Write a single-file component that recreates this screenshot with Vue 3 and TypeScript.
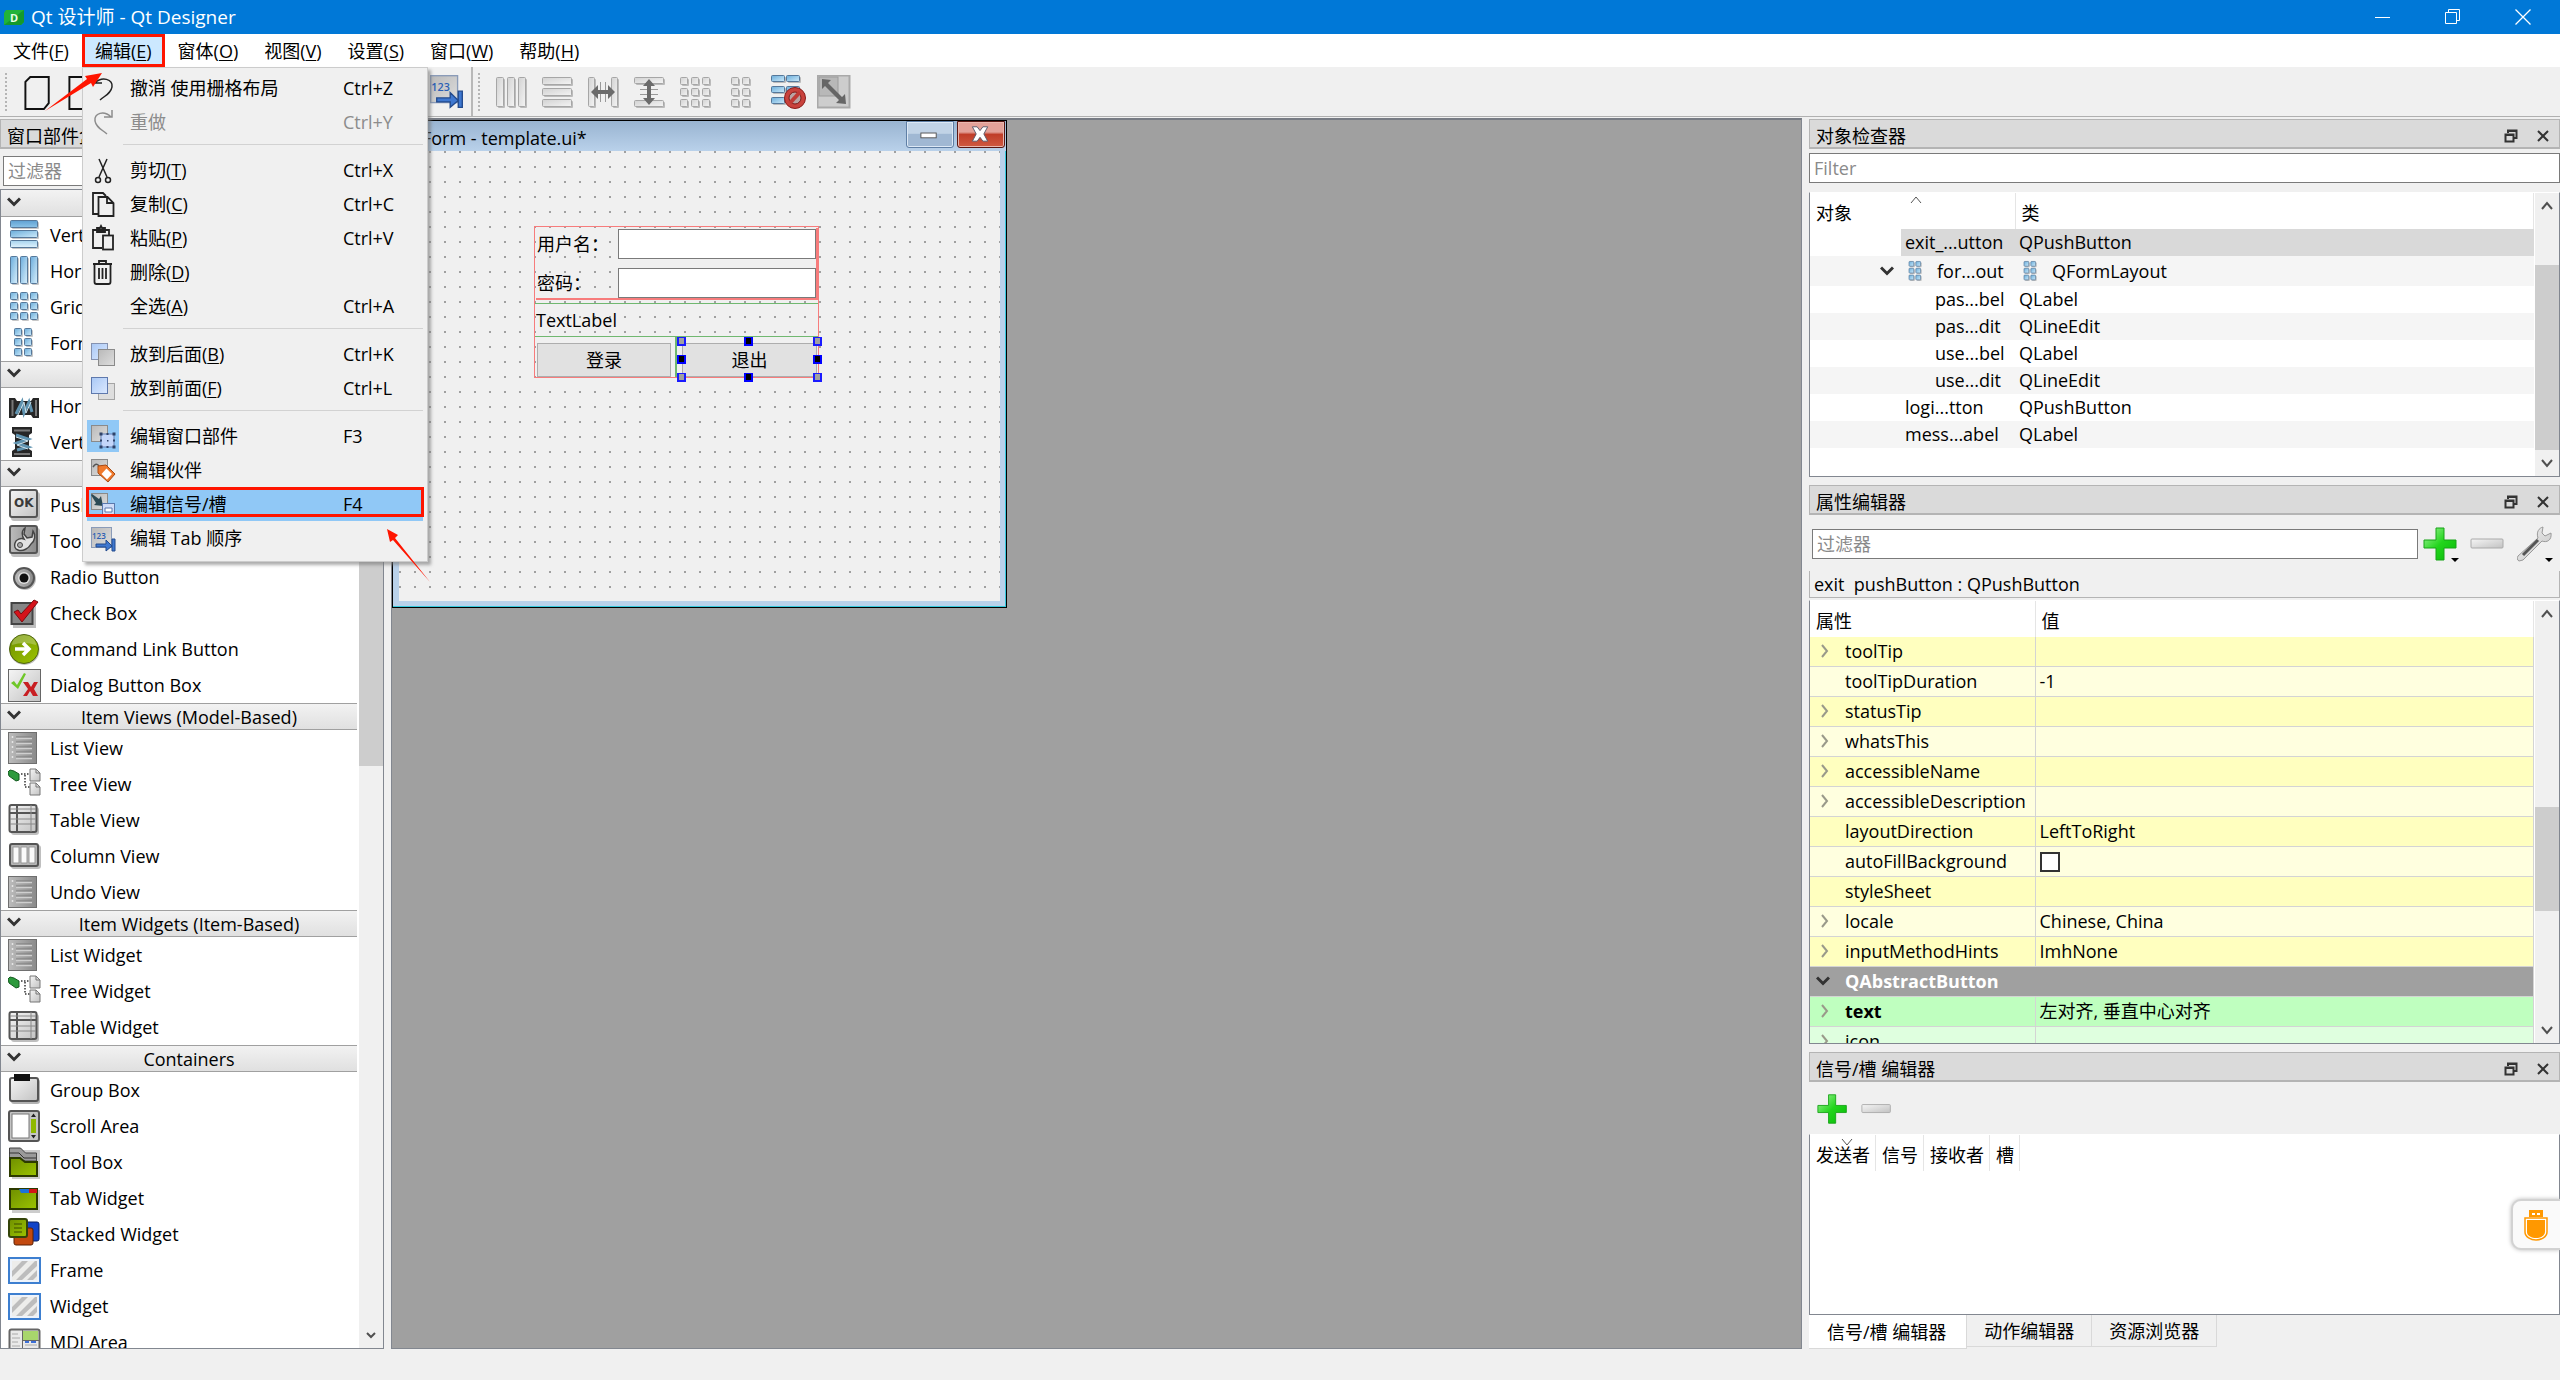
<script setup lang="ts">
import { ref } from 'vue'

type IconMap = Record<string, string>

const bar = (x: number, y: number, w: number, h: number, fill: string, stroke: string) =>
  `<rect x="${x + 2}" y="${y + 2}" width="${w}" height="${h}" rx="1" fill="#000" opacity=".22"/>` +
  `<rect x="${x + 0.5}" y="${y + 0.5}" width="${w}" height="${h}" rx="1" fill="url(#${fill})" stroke="${stroke}"/>`

const cells = (xs: number[], ys: number[], w: number, h: number, fill: string, stroke: string) =>
  ys.map((y) => xs.map((x) => bar(x, y, w, h, fill, stroke)).join('')).join('')

const BLUE = '#56789a'
const GREY = '#a6a6a6'

const page = (x: number, y: number) =>
  `<path d="M${x} ${y}h6l4 4v8h-10z" fill="url(#silver)" stroke="#777"/><path d="M${x + 6} ${y}v4h4" fill="none" stroke="#777"/>`

const listIcon =
  '<rect x=".5" y=".5" width="28" height="31" fill="url(#steel)" stroke="#6f6f6f"/>' +
  '<path d="M8 5h16M8 10h16M8 15h16M8 20h16M8 25h16" stroke="#7c7c7c" stroke-width="1"/>' +
  '<path d="M8 6.500h16M8 11.500h16M8 16.500h16M8 21.500h16M8 26.500h16" stroke="#cfcfcf" stroke-width="1.500"/>' +
  '<path d="M4.500 4v25" stroke="#e4e4e4" stroke-width="1.500" stroke-dasharray="2 3"/>'

const treeIcon =
  '<path d="M0 4l2-2 4 1 5 3v6l-3 1-7-5z" fill="#2d9a3d" stroke="#145c20"/>' +
  '<path d="M13 6h9M17 7v12h5" fill="none" stroke="#333" stroke-width="1.500" stroke-dasharray="1.500 1.500"/>' +
  page(22, 1) + page(22, 15)

const tableIcon =
  '<rect x="3" y="3" width="28" height="28" rx="3" fill="#000" opacity=".25"/>' +
  '<rect x="1.500" y="1" width="27" height="27" rx="2" fill="url(#silver)" stroke="#555" stroke-width="2"/>' +
  '<path d="M2 9h26M9 1v27" stroke="#555" stroke-width="2"/><path d="M2 5h26M2 15h26M2 20h26M23 1v27" stroke="#888"/>'

const hatch =
  '<rect x="1" y="4" width="31" height="25" fill="#eef3fa" stroke="#3d7fd0" stroke-width="2"/>' +
  '<rect x="4" y="7" width="25" height="19" fill="#ededeb"/>' +
  '<path d="M4 17l10-10h6L4 23zM8 26l19-19h2v5L14 26zM19 26l10-10v6l-4 4z" fill="#bdbdbd"/>'

const boxIcons: IconMap = {
  vlay: cells([2], [1], 27, 7, 'blueA', BLUE) + cells([2], [11], 27, 7, 'blueH', BLUE) + cells([2], [21], 27, 7, 'blueC', BLUE),
  hlay: cells([2, 12, 22], [1], 7, 27, 'blueV', BLUE),
  grid: cells([2, 12, 22], [1, 11, 21], 7, 7, 'blueH', BLUE),
  form: cells([6, 16], [1, 11, 21], 7, 7, 'blueH', BLUE),
  hspring:
    '<path d="M1 8h6l2 3h14l2-3h6v20h-6l-2-3H9l-2 3H1z" fill="#262626"/><path d="M4.500 10v16M28 10v16" stroke="#777" stroke-width="2"/>' +
    '<path d="M8 24l6-12 2 11 5-11 3 10" fill="none" stroke="#5f93b0" stroke-width="3"/><path d="M10 25l6-13 2 11 5-11" fill="none" stroke="#cfe3ec"/>',
  vspring:
    '<path d="M4 1h20v6l-3 2v14l3 2v6H4v-6l3-2V9L4 7z" fill="#262626"/><path d="M6 4.500h16M6 28h16" stroke="#777" stroke-width="2"/>' +
    '<path d="M8 9l12 4-11 4 11 4-11 3" fill="none" stroke="#5f93b0" stroke-width="3"/><path d="M8 11l12 4-11 4 11 4" fill="none" stroke="#cfe3ec"/>',
  push:
    '<rect x="3" y="3" width="29" height="29" rx="3" fill="#000" opacity=".25"/><rect x="2" y="1" width="27" height="27" rx="2" fill="url(#silver)" stroke="#555" stroke-width="2"/>' +
    '<text x="6" y="18" font-size="12" font-weight="700" font-family="DejaVu Sans, sans-serif" fill="#3a3a3a">OK</text>',
  tool:
    '<rect x="3" y="3" width="29" height="29" rx="3" fill="#000" opacity=".25"/><rect x="2" y="1" width="27" height="27" rx="2" fill="url(#steel)" stroke="#555" stroke-width="2"/>' +
    '<path d="M17 3c-4 3-3 8-1 11-3-1-8 0-9 4-1 3 0 6 3 7 5 2 11-2 13-6 4-3 5-9 2-13l-1 6-5 1-3-4z" fill="#e2e2e2" stroke="#444" stroke-width="1.500"/><circle cx="12" cy="20" r="2.500" fill="#aaa" stroke="#444"/>',
  radio:
    '<circle cx="17" cy="18" r="11" fill="#000" opacity=".25"/><circle cx="16" cy="17" r="10" fill="url(#steel)" stroke="#555" stroke-width="2"/><circle cx="16" cy="17" r="6" fill="#ddd"/><circle cx="16" cy="17" r="4.500" fill="#111"/>',
  check:
    '<rect x="5" y="8" width="23" height="23" fill="#000" opacity=".25"/><rect x="3.500" y="6" width="21" height="21" fill="#858585" stroke="#444" stroke-width="2"/>' +
    '<path d="M6 15l4-2 3 4L26 3l4 2-16 20z" fill="#d5131b" stroke="#7c0b0f"/>',
  command:
    '<circle cx="16.500" cy="17" r="15" fill="#000" opacity=".25"/><circle cx="16" cy="16" r="14.500" fill="url(#olive)" stroke="#4f6510"/><path d="M4 12a12 10 0 0 1 24 0q-12-4-24 0z" fill="#fff" opacity=".25"/>' +
    '<path d="M7 16h14M15 10l6 6-6 6" fill="none" stroke="#fff" stroke-width="3.500"/>',
  dialog:
    '<rect x=".5" y=".5" width="32" height="32" fill="url(#silver)" stroke="#666"/><path d="M3 14l3-2 3 4 7-12 2 1-8 15z" fill="#6fc728"/>' +
    '<path d="M15 13h5l3 5 3-5h4l-4 7 4 7h-5l-3-5-3 5h-4l5-7z" fill="#c81e22"/>',
  list: listIcon,
  tree: treeIcon,
  table: tableIcon,
  column:
    '<rect x="3" y="5" width="30" height="24" rx="3" fill="#000" opacity=".25"/><rect x="2" y="4" width="28" height="22" rx="2" fill="#b5b5b5" stroke="#555" stroke-width="2"/>' +
    '<path d="M5 7h6v16H5zM13 7h6v16h-6zM21 7h6v16h-6z" fill="#fafafa" stroke="#999"/>',
  group:
    '<rect x="3" y="5" width="29" height="25" rx="3" fill="#000" opacity=".3"/><rect x="2" y="4" width="28" height="23" rx="2" fill="url(#silver)" stroke="#555" stroke-width="2"/><rect x="6" y="0" width="16" height="7" fill="#111"/>',
  scroll:
    '<rect x="1" y="1" width="30" height="30" rx="2" fill="#c4c4c4" stroke="#555" stroke-width="2"/><rect x="4" y="4" width="17" height="24" fill="#fff" stroke="#777"/>' +
    '<rect x="23" y="9" width="5" height="14" fill="#8fb800"/><path d="M23 7l2.500-3.500L28 7zM23 25h5l-2.500 3.500z" fill="#222"/>',
  toolbox:
    '<rect x="4" y="4" width="28" height="29" fill="#000" opacity=".2"/><path d="M1.500 2h11l5 5h11v8h-27z" fill="#9a9a9a" stroke="#444"/><path d="M1 7h10l5 5h12" fill="none" stroke="#333"/>' +
    '<path d="M2 12h10l5 4h12v14H2z" fill="url(#olive)" stroke="#2c3a00" stroke-width="2"/>',
  tabw:
    '<rect x="4" y="8" width="28" height="23" fill="#000" opacity=".2"/><rect x="2" y="7" width="27" height="20" fill="url(#olive)" stroke="#2c3a00" stroke-width="2"/>' +
    '<path d="M11 7h10v4H13z" fill="#1c73d8"/><path d="M21 7h8v4h-8z" fill="#d21515"/>',
  stacked:
    '<rect x="18" y="4" width="13" height="19" rx="2" fill="#1344c8" stroke="#0a2060"/><rect x="6" y="10" width="19" height="17" rx="2" fill="#c2490f" stroke="#5c2104"/>' +
    '<rect x="1" y="1" width="18" height="18" rx="2" fill="url(#olive)" stroke="#34440a" stroke-width="2"/><path d="M6 6h8M6 10h8M6 14h8" stroke="#3c4d00"/>',
  frame: hatch,
  mdi:
    '<rect x="1.500" y="3.500" width="30" height="28" rx="2" fill="#e9e9e9" stroke="#666" stroke-width="2"/><rect x="15" y="5" width="15" height="9" fill="#a8d66c"/>' +
    '<path d="M14.500 4v28M15 14.500h16" stroke="#666"/><path d="M4 8h6M4 12h8M4 16h6M4 20h8M17 19h12" stroke="#aaa"/><path d="M17 16h4M23 16h5" stroke="#3c6fd8" stroke-width="2"/>',
}

interface BoxItem { icon: string; label: string }
interface BoxGroup { title: string; items: BoxItem[] }

const widgetBox: BoxGroup[] = [
  { title: 'Layouts', items: [
    { icon: 'vlay', label: 'Vertical Layout' }, { icon: 'hlay', label: 'Horizontal Layout' },
    { icon: 'grid', label: 'Grid Layout' }, { icon: 'form', label: 'Form Layout' } ] },
  { title: 'Spacers', items: [
    { icon: 'hspring', label: 'Horizontal Spacer' }, { icon: 'vspring', label: 'Vertical Spacer' } ] },
  { title: 'Buttons', items: [
    { icon: 'push', label: 'Push Button' }, { icon: 'tool', label: 'Tool Button' }, { icon: 'radio', label: 'Radio Button' },
    { icon: 'check', label: 'Check Box' }, { icon: 'command', label: 'Command Link Button' }, { icon: 'dialog', label: 'Dialog Button Box' } ] },
  { title: 'Item Views (Model-Based)', items: [
    { icon: 'list', label: 'List View' }, { icon: 'tree', label: 'Tree View' }, { icon: 'table', label: 'Table View' },
    { icon: 'column', label: 'Column View' }, { icon: 'list', label: 'Undo View' } ] },
  { title: 'Item Widgets (Item-Based)', items: [
    { icon: 'list', label: 'List Widget' }, { icon: 'tree', label: 'Tree Widget' }, { icon: 'table', label: 'Table Widget' } ] },
  { title: 'Containers', items: [
    { icon: 'group', label: 'Group Box' }, { icon: 'scroll', label: 'Scroll Area' }, { icon: 'toolbox', label: 'Tool Box' },
    { icon: 'tabw', label: 'Tab Widget' }, { icon: 'stacked', label: 'Stacked Widget' }, { icon: 'frame', label: 'Frame' },
    { icon: 'frame', label: 'Widget' }, { icon: 'mdi', label: 'MDI Area' } ] },
]

const layoutTools = [
  { name: '水平布局', art: cells([1, 12, 23], [2], 7, 29, 'greyH', GREY) },
  { name: '垂直布局', art: cells([1], [2, 13, 24], 29, 7, 'greyH', GREY) },
  { name: '水平分裂器', art: cells([1, 24], [2], 6, 29, 'greyH', GREY) +
    '<path d="M13.500 7v20M18.500 7v20" stroke="#999"/><path d="M4 17l7-7v5h10v-5l7 7-7 7v-5H11v5z" fill="#6b6b6b"/>' },
  { name: '垂直分裂器', art: cells([1], [2, 25], 29, 6, 'greyH', GREY) +
    '<path d="M7 14.500h18M7 19.500h18" stroke="#999"/><path d="M16 4l6 7h-4v12h4l-6 7-6-7h4V11h-4z" fill="#6b6b6b"/>' },
  { name: '栅格布局', art: cells([1, 12, 23], [2, 13, 24], 7, 7, 'greyH', GREY) },
  { name: '表单布局', art: cells([6, 17], [2, 13, 24], 7, 7, 'greyH', GREY) },
  { name: '打破布局', art: cells([0, 15], [0, 11, 22], 13, 6, 'blueH', BLUE) +
    '<circle cx="24" cy="23" r="10.500" fill="#c9423c" stroke="#8a1d1a"/><circle cx="24" cy="23" r="6" fill="#b9a3a3" stroke="#7c1c1a"/><path d="M19 28l10-11" stroke="#c03a35" stroke-width="4"/>' },
  { name: '调整大小', art: '<rect x=".5" y=".5" width="32" height="32" fill="#cdcdcd" stroke="#a9a9a9" stroke-width="2"/><rect x="2" y="2" width="19" height="19" fill="#b8b8b8" stroke="#9c9c9c"/>' +
    '<path d="M5 4l9 1-3 3 14 14 3-3 1 10-10-1 3-3L8 11l-3 3z" fill="#666"/>' },
]

const sq = (x: number, y: number, fill: string, stroke = '#8a8a8a') =>
  `<rect x="${x + 0.5}" y="${y + 0.5}" width="16" height="16" fill="${fill}" stroke="${stroke}"/>`

const menuIcons: IconMap = {
  undo: '<path d="M8 11C15 4 26 7 25 15c-1 6-6 8-12 13M7 4v7h8" fill="none" stroke="#222" stroke-width="1.500"/>',
  redo: '<path d="M24 11C17 4 7 7 8 15c1 6 6 8 12 13M25 4v7h-8" fill="none" stroke="#8c8c8c" stroke-width="1.500"/>',
  cut: '<path d="M12 5l8 18M20 5l-8 18" fill="none" stroke="#222" stroke-width="1.500"/><circle cx="11" cy="26" r="2.500" fill="none" stroke="#222" stroke-width="1.500"/><circle cx="21" cy="26" r="2.500" fill="none" stroke="#222" stroke-width="1.500"/>',
  copy: '<path d="M11 26H6V5h10l3 3" fill="none" stroke="#222" stroke-width="1.800"/><path d="M11.500 9h9l6 6v13h-15zM20 9v6h6" fill="none" stroke="#222" stroke-width="1.800"/>',
  paste: '<path d="M15 26H6V8h16v5M10 10V6h3l1-2 1 2h3v4z" fill="none" stroke="#222" stroke-width="1.800"/><rect x="16" y="13.500" width="10" height="14" fill="none" stroke="#222" stroke-width="1.800"/>',
  del: '<path d="M6 8h19M12 8V5h7v3M7.500 8v18q0 2 2 2h12q2 0 2-2V8M12 12v11M15.500 12v11M19 12v11" fill="none" stroke="#222" stroke-width="1.800"/>',
  back: sq(4, 5, 'url(#sky)', '#8592b0') + sq(11, 11, 'url(#steelLight)'),
  front: sq(11, 11, '#dedede', '#a5a5a5') + sq(4, 5, 'url(#sky)', '#5f79ad'),
  widgets: sq(4, 5, 'url(#steelLight)') + '<rect x="14" y="14" width="13" height="13" fill="#c3d6fa" stroke="#6480b5"/>' +
    '<path d="M12.500 12.500h3v3h-3zM19.500 13h2v2h-2zM25.500 12.500h3v3h-3zM13 19.500h2v2h-2zM26 19.500h2v2h-2zM12.500 25.500h3v3h-3zM19.500 26h2v2h-2zM25.500 25.500h3v3h-3zM20 20h1.500v1.500H20z" fill="#2f4369"/>',
  buddy: sq(4, 5, 'url(#steelLight)') + '<path d="M6 13q3-5 6-1" stroke="#555" stroke-width="1.500" fill="none"/><path d="M11 12l8-1 9 9-7 8-10-9z" fill="#f0792b" stroke="#a9480f"/><path d="M19.500 14.500l5.500 5.500-5 5.500-5.500-5.500z" fill="#fff"/>',
  signals: sq(4, 5, 'url(#steelLight)') + '<path d="M5 6l7 5 2-3 2 10-9-1 2-2-5-8z" fill="#2c4a55"/><rect x="15.500" y="15.500" width="12" height="11" fill="#cfdcf8" stroke="#5b79ad"/><path d="M18 20h7v4h-7z" fill="#fff" stroke="#5b79ad"/>',
  tab: '<rect x="4.500" y="5.500" width="20" height="20" fill="url(#steelLight)" stroke="#8a9bb8"/><path d="M9 22h10v-4l6 6-6 5v-4H9zM25 17h3v12h-3z" fill="#3f78d0" stroke="#224a8d"/>' +
    '<text x="5" y="17" font-size="8" font-weight="600" font-family="Open Sans, sans-serif" fill="#2b5fb4">123</text>',
}

interface MenuItem { icon?: string; text: string; key?: string; sc?: string; off?: boolean; checked?: boolean; hot?: boolean }

const editMenu: MenuItem[][] = [
  [ { icon: 'undo', text: '撤消 使用栅格布局', sc: 'Ctrl+Z' }, { icon: 'redo', text: '重做', sc: 'Ctrl+Y', off: true } ],
  [ { icon: 'cut', text: '剪切', key: 'T', sc: 'Ctrl+X' }, { icon: 'copy', text: '复制', key: 'C', sc: 'Ctrl+C' },
    { icon: 'paste', text: '粘贴', key: 'P', sc: 'Ctrl+V' }, { icon: 'del', text: '删除', key: 'D' }, { text: '全选', key: 'A', sc: 'Ctrl+A' } ],
  [ { icon: 'back', text: '放到后面', key: 'B', sc: 'Ctrl+K' }, { icon: 'front', text: '放到前面', key: 'F', sc: 'Ctrl+L' } ],
  [ { icon: 'widgets', text: '编辑窗口部件', sc: 'F3', checked: true }, { icon: 'buddy', text: '编辑伙伴' },
    { icon: 'signals', text: '编辑信号/槽', sc: 'F4', hot: true }, { icon: 'tab', text: '编辑 Tab 顺序' } ],
]

const menus = [
  { text: '文件', key: 'F' }, { text: '编辑', key: 'E' }, { text: '窗体', key: 'O' }, { text: '视图', key: 'V' },
  { text: '设置', key: 'S' }, { text: '窗口', key: 'W' }, { text: '帮助', key: 'H' },
]

const objects = [
  { name: 'exit_...utton', cls: 'QPushButton', level: 1, selected: true },
  { name: 'for...out', cls: 'QFormLayout', level: 1, layout: true },
  { name: 'pas...bel', cls: 'QLabel', level: 2 },
  { name: 'pas...dit', cls: 'QLineEdit', level: 2 },
  { name: 'use...bel', cls: 'QLabel', level: 2 },
  { name: 'use...dit', cls: 'QLineEdit', level: 2 },
  { name: 'logi...tton', cls: 'QPushButton', level: 1 },
  { name: 'mess...abel', cls: 'QLabel', level: 1 },
]

interface Prop { name: string; value?: string; more?: boolean; check?: boolean; tone: string }
const properties: Prop[] = [
  { name: 'toolTip', more: true, tone: 'y1' },
  { name: 'toolTipDuration', value: '-1', tone: 'y2' },
  { name: 'statusTip', more: true, tone: 'y1' },
  { name: 'whatsThis', more: true, tone: 'y2' },
  { name: 'accessibleName', more: true, tone: 'y1' },
  { name: 'accessibleDescription', more: true, tone: 'y2' },
  { name: 'layoutDirection', value: 'LeftToRight', tone: 'y1' },
  { name: 'autoFillBackground', check: true, tone: 'y2' },
  { name: 'styleSheet', tone: 'y1' },
  { name: 'locale', value: 'Chinese, China', more: true, tone: 'y2' },
  { name: 'inputMethodHints', value: 'ImhNone', more: true, tone: 'y1' },
  { name: 'QAbstractButton', tone: 'head' },
  { name: 'text', value: '左对齐, 垂直中心对齐', more: true, tone: 'g1' },
  { name: 'icon', more: true, tone: 'g2' },
]

const handles = ['tl', 'tc', 'tr', 'ml', 'mr', 'bl', 'bc', 'br']
const tabs = ['信号/槽 编辑器', '动作编辑器', '资源浏览器']
const activeTab = ref(0)
const autoFill = ref(false)
</script>

<template>
  <div class="app">
    <svg class="defs" width="0" height="0" aria-hidden="true">
      <defs>
        <linearGradient id="blueA" x2="0" y2="1"><stop offset="0" stop-color="#5fa0d2" /><stop offset="1" stop-color="#8cc4e8" /></linearGradient>
        <linearGradient id="blueC" x2="0" y2="1"><stop offset="0" stop-color="#a5d3ee" /><stop offset="1" stop-color="#dff2fc" /></linearGradient>
        <linearGradient id="blueH" x2="1" y2="1"><stop offset="0" stop-color="#6aadda" /><stop offset="1" stop-color="#cdeafa" /></linearGradient>
        <linearGradient id="blueV" x2="1" y2="1"><stop offset="0" stop-color="#6aabdb" /><stop offset="1" stop-color="#d9f0fc" /></linearGradient>
        <linearGradient id="greyH" x2="1" y2="1"><stop offset="0" stop-color="#d2d2d2" /><stop offset="1" stop-color="#f4f4f4" /></linearGradient>
        <linearGradient id="silver" x2="1" y2="1"><stop offset="0" stop-color="#f5f5f5" /><stop offset="1" stop-color="#c2c2c2" /></linearGradient>
        <linearGradient id="steel" x2="1" y2="0"><stop offset="0" stop-color="#bcbcbc" /><stop offset="1" stop-color="#8a8a8a" /></linearGradient>
        <linearGradient id="steelLight" x2="1" y2="1"><stop offset="0" stop-color="#b9b9b9" /><stop offset="1" stop-color="#dedede" /></linearGradient>
        <linearGradient id="sky" x2="1" y2="1"><stop offset="0" stop-color="#a9c8f5" /><stop offset="1" stop-color="#dce9ff" /></linearGradient>
        <linearGradient id="olive" x2="1" y2="1"><stop offset="0" stop-color="#6f8f00" /><stop offset="1" stop-color="#9cc400" /></linearGradient>
        <linearGradient id="green" x2="1" y2="1"><stop offset="0" stop-color="#a8f5a0" /><stop offset=".5" stop-color="#22d51c" /><stop offset="1" stop-color="#06b806" /></linearGradient>
      </defs>
    </svg>

    <header class="titlebar">
      <svg class="logo" viewBox="0 0 20 15"><path d="M2 0h18v12l-3 3H0V3z" fill="#21b33a" /><path d="M0 15L20 0v12l-3 3z" fill="#149a2c" /><text x="6" y="12" font-size="11" font-weight="700" font-family="Open Sans, sans-serif" fill="#e8ffe8">D</text></svg>
      <h1>Qt 设计师 - Qt Designer</h1>
      <button aria-label="最小化"><svg viewBox="0 0 16 16"><path d="M0 8.500h15" stroke="#fff" /></svg></button>
      <button aria-label="还原"><svg viewBox="0 0 16 16"><path d="M.5 3.500h11v11H.5zM3.500 3V.5h11v11H12" fill="none" stroke="#fff" /></svg></button>
      <button aria-label="关闭"><svg viewBox="0 0 16 16"><path d="M.5.5l15 15M15.500.5l-15 15" fill="none" stroke="#fff" stroke-width="1.300" /></svg></button>
    </header>

    <nav class="menubar">
      <div v-for="m in menus" :key="m.key" class="menu" :class="{ open: m.key === 'E' }">
        <button class="menu-title">{{ m.text }}(<u>{{ m.key }}</u>)</button>
        <div v-if="m.key === 'E'" class="popup">
          <div v-for="(group, gi) in editMenu" :key="gi" class="popup-group">
            <button v-for="it in group" :key="it.text" class="popup-item" :class="{ hot: it.hot, checked: it.checked }" :disabled="it.off">
              <svg viewBox="0 0 32 32" v-html="it.icon ? menuIcons[it.icon] : ''" />
              <span class="caption">{{ it.text }}<template v-if="it.key">(<u>{{ it.key }}</u>)</template></span>
              <span class="shortcut">{{ it.sc }}</span>
            </button>
          </div>
        </div>
      </div>
    </nav>

    <div class="toolbar">
      <div class="tools files">
        <i class="grip" />
        <button aria-label="新建"><svg viewBox="0 0 33 36"><path d="M7 2h19v27l-5 6H2V7z" fill="none" stroke="#111" stroke-width="2" /></svg></button>
        <button aria-label="打开"><svg viewBox="0 0 33 36"><path d="M26 2H2v33h24z" fill="none" stroke="#111" stroke-width="2" /></svg></button>
        <button class="last" aria-label="编辑 Tab 顺序"><svg viewBox="4 5 26 26" v-html="menuIcons.tab" /></button>
      </div>
      <div class="tools">
        <i class="grip" />
        <button v-for="t in layoutTools" :key="t.name" :aria-label="t.name"><svg viewBox="0 0 35 35" v-html="t.art" /></button>
      </div>
    </div>

    <main class="work">
      <aside class="dock left">
        <h2 class="dock-title">窗口部件盒</h2>
        <input class="field box-filter" placeholder="过滤器" aria-label="过滤器" />
        <div class="box">
          <div class="box-list">
            <section v-for="g in widgetBox" :key="g.title">
              <h3><svg viewBox="0 0 14 10"><path d="M1 1.500l6 6 6-6" /></svg><span>{{ g.title }}</span></h3>
              <ul>
                <li v-for="it in g.items" :key="it.label"><svg viewBox="0 0 33 33" v-html="boxIcons[it.icon]" />{{ it.label }}</li>
              </ul>
            </section>
          </div>
          <div class="scrollbar">
            <svg viewBox="0 0 24 26"><path d="M7 15l5-5 5 5" /></svg>
            <div class="thumb" :style="{ flexGrow: 550 }" /><div :style="{ flexGrow: 557 }" />
            <svg viewBox="0 0 24 26"><path d="M8 11l4 4 4-4" /></svg>
          </div>
        </div>
      </aside>

      <section class="mdi">
        <div class="window">
          <header>
            <h2>Form - template.ui*</h2>
            <button class="min" aria-label="最小化"><svg viewBox="0 0 48 26"><rect x="14.500" y="11.500" width="16" height="5" fill="#fff" stroke="#555" /></svg></button>
            <button class="close" aria-label="关闭"><svg viewBox="0 0 48 26"><path d="M15 5h5l3 4 3-4h5l-4 7.500 4 7.500h-5l-3-4-3 4h-5l4-7.500z" fill="#fff" stroke="#5a5a6a" /></svg></button>
          </header>
          <div class="canvas">
            <form class="login" @submit.prevent>
              <div class="fields">
                <label for="user">用户名：</label><input id="user" />
                <label for="pass">密码：</label><input id="pass" />
              </div>
              <p>TextLabel</p>
              <div class="actions">
                <button type="button">登录</button>
                <div class="selected"><button type="button">退出</button><i v-for="h in handles" :key="h" :class="h" /></div>
              </div>
            </form>
          </div>
        </div>
      </section>

      <aside class="dock right">
        <section class="panel">
          <h2 class="dock-title">对象检查器
            <span><button aria-label="浮动"><svg viewBox="0 0 14 14"><path d="M4 4V1.500h8.500V9H10" /><path d="M1.500 5.500h8v7h-8zM1 6h9M4 2h9" /></svg></button><button aria-label="关闭"><svg viewBox="0 0 14 14"><path d="M2 2l10 10M12 2L2 12" /></svg></button></span>
          </h2>
          <input class="field obj-filter" placeholder="Filter" aria-label="Filter" />
          <div class="view tree">
            <table>
              <colgroup><col class="c-obj" /><col /></colgroup>
              <thead><tr><th>对象<svg class="sort" viewBox="0 0 12 8"><path d="M1 7l5-6 5 6" /></svg></th><th>类</th></tr></thead>
              <tbody>
                <tr v-for="o in objects" :key="o.name" :class="{ sel: o.selected, lay: o.layout }">
                  <td :class="'l' + o.level">
                    <div><svg v-if="o.layout" class="twist" viewBox="0 0 14 10"><path d="M1 1.500l6 6 6-6" /></svg><svg v-if="o.layout" class="lay-ico" viewBox="5 0 22 31" v-html="boxIcons.form" />{{ o.name }}</div>
                  </td>
                  <td><div><svg v-if="o.layout" class="lay-ico" viewBox="5 0 22 31" v-html="boxIcons.form" />{{ o.cls }}</div></td>
                </tr>
              </tbody>
            </table>
            <div class="scrollbar">
              <svg viewBox="0 0 24 26"><path d="M7 16l5-6 5 6" /></svg>
              <div :style="{ flexGrow: 46 }" /><div class="thumb" :style="{ flexGrow: 186 }" />
              <svg viewBox="0 0 24 26"><path d="M7 10l5 6 5-6" /></svg>
            </div>
          </div>
        </section>

        <section class="panel">
          <h2 class="dock-title">属性编辑器
            <span><button aria-label="浮动"><svg viewBox="0 0 14 14"><path d="M4 4V1.500h8.500V9H10" /><path d="M1.500 5.500h8v7h-8zM1 6h9M4 2h9" /></svg></button><button aria-label="关闭"><svg viewBox="0 0 14 14"><path d="M2 2l10 10M12 2L2 12" /></svg></button></span>
          </h2>
          <div class="prop-tools">
            <input class="field" placeholder="过滤器" aria-label="过滤器" />
            <button aria-label="添加"><svg viewBox="0 0 36 36"><path d="M13 2h8v12h12v8H21v12h-8V22H1v-8h12z" fill="url(#green)" stroke="#17a317" /><path d="M28 32h8l-4 4z" fill="#000" /></svg></button>
            <button aria-label="删除"><svg viewBox="0 0 36 36"><rect x="1" y="13" width="32" height="9" rx="1" fill="url(#silver)" stroke="#aaa" /></svg></button>
            <button aria-label="配置"><svg viewBox="0 0 36 36"><path d="M2 35c-2-1-2-3-1-5L21 12c-2-6 1-10 5-11l-1 6 3 3 6-3c1 7-4 10-9 8L6 34z" fill="url(#silver)" stroke="#999" /><path d="M6 29L21 14" stroke="#555" stroke-width="3" /><path d="M28 32h8l-4 4z" fill="#000" /></svg></button>
          </div>
          <p class="object-name">exit&nbsp; pushButton : QPushButton</p>
          <div class="view props">
            <table>
              <colgroup><col class="c-prop" /><col /></colgroup>
              <thead><tr><th>属性</th><th>值</th></tr></thead>
              <tbody>
                <tr v-for="p in properties" :key="p.name" :class="p.tone">
                  <td :colspan="p.tone === 'head' ? 2 : 1">
                    <div><svg v-if="p.more" class="more" viewBox="0 0 10 14"><path d="M2 1l5 6-5 6" /></svg><svg v-if="p.tone === 'head'" class="twist" viewBox="0 0 14 10"><path d="M1 1.500l6 6 6-6" /></svg><span>{{ p.name }}</span></div>
                  </td>
                  <td v-if="p.tone !== 'head'"><div><input v-if="p.check" v-model="autoFill" type="checkbox" aria-label="autoFillBackground" />{{ p.value }}</div></td>
                </tr>
              </tbody>
            </table>
            <div class="scrollbar">
              <svg viewBox="0 0 24 26"><path d="M7 16l5-6 5 6" /></svg>
              <div :style="{ flexGrow: 180 }" /><div class="thumb" :style="{ flexGrow: 105 }" /><div :style="{ flexGrow: 106 }" />
              <svg viewBox="0 0 24 26"><path d="M7 10l5 6 5-6" /></svg>
            </div>
          </div>
        </section>

        <section class="panel">
          <h2 class="dock-title">信号/槽 编辑器
            <span><button aria-label="浮动"><svg viewBox="0 0 14 14"><path d="M4 4V1.500h8.500V9H10" /><path d="M1.500 5.500h8v7h-8zM1 6h9M4 2h9" /></svg></button><button aria-label="关闭"><svg viewBox="0 0 14 14"><path d="M2 2l10 10M12 2L2 12" /></svg></button></span>
          </h2>
          <div class="sig-tools">
            <button aria-label="添加"><svg viewBox="0 0 36 36"><path d="M13 2h8v12h12v8H21v12h-8V22H1v-8h12z" fill="url(#green)" stroke="#17a317" /></svg></button>
            <button aria-label="删除"><svg viewBox="0 0 36 36"><rect x="1" y="13" width="32" height="9" rx="1" fill="url(#silver)" stroke="#aaa" /></svg></button>
          </div>
          <div class="view signals">
            <table>
              <thead><tr><th>发送者<svg class="sort" viewBox="0 0 12 8"><path d="M1 1l5 6 5-6" /></svg></th><th>信号</th><th>接收者</th><th>槽</th></tr></thead>
            </table>
          </div>
        </section>
        <div class="tabs" role="tablist">
          <button v-for="(t, i) in tabs" :key="t" role="tab" :aria-selected="i === activeTab" :class="{ on: i === activeTab }" @click="activeTab = i">{{ t }}</button>
        </div>
      </aside>
    </main>
    <footer class="status" />

    <button class="usb" aria-label="USB">
      <svg viewBox="0 0 24 32"><path d="M5 8V1h14v7" fill="#ff9800" /><path d="M8 4h3v2H8zM13 4h3v2h-3z" fill="#fff" /><path d="M1 9h22v14c0 5-6 8-11 8S1 28 1 23z" fill="#fff" stroke="#ff9800" stroke-width="1.500" /><path d="M3 11h18v12c0 4-5 6-9 6s-9-2-9-6z" fill="#ff9800" /></svg>
    </button>
    <svg class="arrow a1" viewBox="0 0 57 40"><path d="M0 39L42 7l-2-3 17-3-9 14-2-4z" fill="#ff1500" /></svg>
    <svg class="arrow a2" viewBox="0 0 44 54"><path d="M43 53L6 11l-3 2L0 0l11 6-3 3z" fill="#ff1500" /></svg>
  </div>
</template>

<style>
body { margin: 0; overflow: hidden; }
</style>

<style scoped>
.app { position: relative; display: flex; flex-direction: column; height: 100vh; background: #f0f0f0; color: #000; font: 18px/24px "Open Sans", "Noto Sans CJK SC", sans-serif; }
.app *, .app { box-sizing: border-box; }
.defs { position: absolute; }
button, input { font: inherit; color: inherit; }
button { padding: 0; border: 0; background: none; }
h1, h2, h3, p, ul { margin: 0; padding: 0; font-weight: 400; font-size: 18px; }
ul { list-style: none; }
svg { display: block; flex: none; }
u { text-underline-offset: 2px; text-decoration-thickness: 1px; }

.titlebar { flex: none; display: flex; align-items: center; height: 34px; padding-right: 2px; background: #0078d7; color: #fff; }
.logo { width: 20px; height: 15px; margin: 0 7px 0 4px; }
.titlebar h1 { flex: 1; font-size: 19px; }
.titlebar button { width: 70px; height: 34px; display: grid; place-items: center; }
.titlebar button svg { width: 16px; height: 16px; }

.menubar { flex: none; display: flex; height: 33px; background: #fff; }
.menu { position: relative; }
.menu-title { height: 33px; padding: 0 13px; }
.open .menu-title { background: #cce8ff; outline: 3px solid #ff1500; outline-offset: -3px; }
.popup { position: absolute; z-index: 5; left: 0; top: 33px; width: 346px; padding: 3px 4px 6px; background: #f0f0f0; border: 1px solid #ccc; box-shadow: 3px 3px 3px #7779; }
.popup-group + .popup-group { padding-top: 14px; background: linear-gradient(#d2d2d2, #d2d2d2) 36px 5px / 300px 1px no-repeat; }
.popup-item { position: relative; display: flex; align-items: center; width: 336px; height: 34px; text-align: left; white-space: nowrap; }
.popup-item svg { width: 32px; height: 32px; }
.popup-item .caption { width: 213px; margin-left: 11px; }
.popup-item:disabled { color: #8c8c8c; }
.checked svg { background: #90c8f6; }
.hot { background: #90c8f6; }
.hot::after { content: ""; position: absolute; inset: 0 -1px 4px; border: 3px solid #ff1500; }

.toolbar { flex: none; display: flex; height: 50px; border-bottom: 1px solid #b0b0b0; }
.tools { display: flex; align-items: center; gap: 11px; padding: 1px 0 0 5px; }
.tools button { width: 35px; height: 35px; }
.tools button svg { width: 35px; height: 35px; }
.files { width: 473px; border-right: 2px solid #b8b8b8; }
.files button + button { margin-left: -2px; }
.files .last { margin-left: auto; margin-right: 6px; }
.grip { width: 2px; height: 38px; margin-right: 4px; background: repeating-linear-gradient(#b5b5b5 0 2px, transparent 2px 4px); }

.work { flex: 1; min-height: 0; display: grid; grid-template-columns: 384px 1fr 751px; column-gap: 7px; padding-top: 1px; }
.dock { display: flex; flex-direction: column; min-width: 0; min-height: 0; }
.dock-title { flex: none; display: flex; justify-content: space-between; align-items: center; height: 30px; padding: 4px 6px 0; background: #dadada; border: 1px solid #b4b4b4; border-bottom-width: 2px; margin-top: 1px; }
.dock-title span { display: flex; gap: 18px; padding-right: 3px; }
.dock-title button svg { width: 14px; height: 14px; fill: none; stroke: #333; stroke-width: 2; }
.field { flex: none; height: 30px; padding: 0 4px; border: 1px solid #7a7a7a; background: #fff; outline: 0; min-width: 0; border-radius: 0; }
.field::placeholder { color: #8a8a8a; opacity: 1; }
.box-filter { margin: 7px 3px 3px; }
.box { flex: 1; min-height: 0; display: flex; border: 1px solid #828790; background: #fff; }
.box-list { flex: 1; overflow: hidden; padding-right: 2px; }
.box h3 { display: flex; align-items: center; height: 27px; border-top: 1px solid #a0a0a0; border-bottom: 1px solid #a0a0a0; background: linear-gradient(#f2f2f2, #e0e0e0); }
.box section:first-child h3 { border-top-color: #f2f2f2; }
.box h3 svg { width: 14px; height: 10px; margin: 0 0 4px 6px; }
.box h3 span { flex: 1; text-align: center; }
.box h3 path, .twist path { fill: none; stroke: #333; stroke-width: 3; }
.box li { display: flex; align-items: center; height: 36px; padding-left: 7px; gap: 9px; white-space: nowrap; line-height: 22px; padding-bottom: 1px; }
.box li svg { width: 33px; height: 33px; align-self: flex-end; }
.scrollbar { flex: none; width: 24px; display: flex; flex-direction: column; background: #f0f0f0; }
.scrollbar div { flex-basis: 0; }
.scrollbar .thumb { background: #cdcdcd; }
.scrollbar svg { width: 24px; height: 26px; }
.scrollbar path { fill: none; stroke: #505050; stroke-width: 2; }

.mdi { position: relative; overflow: hidden; background: #a0a0a0; border: 1px solid #828790; border-top: 2px solid #777b84; }
.window { position: absolute; left: 0; top: 0; width: 615px; height: 488px; display: flex; flex-direction: column; padding: 0 6px 6px; background: #b9d1ea; border: 1px solid #000; box-shadow: inset -1px -1px #35c8dc; }
.window header { flex: none; display: flex; height: 30px; margin: 0 -6px; padding: 0 1px 0 29px; background: linear-gradient(#99b4d1, #b9d1ea); }
.window h2 { flex: 1; padding-top: 5px; }
.window header button { width: 48px; height: 27px; margin-left: 3px; border: 1px solid #5f7fa5; border-radius: 0 0 3px 3px; background: linear-gradient(#c1d3e6 45%, #a0b8d3 50%); box-shadow: inset 0 0 0 1px #dce8f5; }
.window header .close { border-color: #5a1712; background: linear-gradient(#e3a198 40%, #c03d28 50%, #cf5a42); box-shadow: inset 0 0 0 1px #e9b7ae; }
.canvas { position: relative; flex: 1; background: #f0f0f0 conic-gradient(from 270deg at 2px 2px, #a0a0a0 25%, transparent 0) 0 0 / 15px 15px; }
.login { position: absolute; left: 135px; top: 75px; width: 285px; border: 1px solid #f77c7c; }
.fields { display: grid; grid-template-columns: 81px 1fr; gap: 9px 0; align-items: center; margin: 1px 0 3px 1px; padding: 1px 0 0 1px; border: solid #f77c7c; border-width: 0 2px 2px 0; white-space: nowrap; }
.fields input { width: 100%; height: 30px; border: 1px solid #7a7a7a; background: #fff; border-radius: 0; }
.login p { height: 34px; padding: 4px 1px; border: solid #70b870; border-width: 1px 0; }
.actions { display: flex; gap: 11px; padding: 6px 0 0 2px; background: linear-gradient(#70b870, #70b870) 140px 0 / 2px 100% no-repeat; }
.actions button { display: block; width: 100%; height: 34px; border: 1px solid #adadad; background: #e1e1e1; }
.actions > button { width: 134px; }
.selected { position: relative; width: 135px; }
.selected i { position: absolute; width: 9px; height: 9px; background: #000; border: 2px solid #00f; border-width: 1px 2px 2px; }
.selected .tl, .selected .tr, .selected .bl, .selected .br { background: #a0a0a0; border-color: #1a1aff; }
.tl, .ml, .bl { left: -5px; }
.tc, .bc { left: 62px; }
.tr, .mr, .br { right: -5px; }
.tl, .tc, .tr { top: -6px; }
.ml, .mr { top: 12px; }
.bl, .bc, .br { bottom: -5px; }

.panel { display: flex; flex-direction: column; min-height: 0; flex: 359 1 0; margin-bottom: 7px; }
.panel:nth-of-type(2) { flex-grow: 560; }
.panel:nth-of-type(3) { flex-grow: 264; margin-bottom: 0; }
.obj-filter { margin: 4px 0 9px; }
.view { flex: 1; min-height: 0; display: flex; align-items: stretch; overflow: hidden; background: #fff; border: 1px solid #828790; border-top-color: #fff; }
.view table { flex: 1; align-self: flex-start; table-layout: fixed; border-collapse: collapse; width: 100%; margin-right: 1px; }
.view th { position: relative; height: 36px; padding: 3px 6px 0; text-align: left; font-weight: 400; border-right: 1px solid #e5e5e5; }
.view td { padding: 0; }
.sort { position: absolute; left: 50%; top: 3px; width: 12px; height: 8px; margin-left: -2px; fill: none; stroke: #555; }
.c-obj { width: 205px; }
.tree td div { display: flex; align-items: center; height: 27px; padding: 0 0 1px 4px; white-space: nowrap; }
.tree .lay div { height: 30px; }
.tree td.l1 > div { margin-left: 91px; }
.tree td.l2 > div { margin-left: 121px; }
.tree tr:nth-child(even) { background: #f5f5f5; }
.tree .sel div { background: #d9d9d9; }
.tree .lay .l1 div { margin-left: 66px; }
.twist { width: 14px; height: 10px; }
.lay-ico { width: 15px; height: 22px; margin: 0 14px 0 4px; }
.tree .l1 .lay-ico { margin-left: 14px; }

.prop-tools { flex: none; display: flex; align-items: center; gap: 11px; height: 56px; padding: 2px 7px 0 3px; }
.prop-tools .field { flex: 1; margin-right: -6px; }
.prop-tools button, .prop-tools svg { width: 36px; height: 36px; }
.object-name { flex: none; height: 27px; margin-bottom: 2px; padding: 1px 4px; border: solid #b4b4b4; border-width: 0 1px 1px; }
.c-prop { width: 225px; }
.props td { border-bottom: 1px solid #d4d4d4; border-right: 1px solid #d4d4d4; }
.props td div { position: relative; display: flex; align-items: center; height: 29px; padding: 0 0 1px 4px; white-space: nowrap; }
.props td:first-child div { padding-left: 10px; }
.props td span { position: absolute; left: 35px; }
.props .head td div { padding-left: 6px; }
.more { width: 10px; height: 14px; fill: none; stroke: #9a9a8a; stroke-width: 2; }
.y1 { background: #ffffbf; }
.y2 { background: #ffffdf; }
.g1 { background: #bfffbf; }
.g2 { background: #dfffdf; }
.head { background: #a0a0a0; color: #fff; font-weight: 700; }
.g1 span { font-weight: 700; }
.props input { appearance: none; width: 20px; height: 20px; margin: 2px 0 0; border: 2px solid #333; background: #fff; }

.sig-tools { flex: none; display: flex; gap: 12px; align-items: center; height: 52px; padding: 2px 0 0 8px; }
.sig-tools button, .sig-tools svg { width: 32px; height: 32px; }
.signals table { flex: none; width: auto; }
.signals th { padding: 3px 5px 0 6px; }
.tabs { flex: none; display: flex; align-items: flex-start; height: 34px; }
.tabs button { height: 32px; padding: 1px 17px 0; border-right: 1px solid #d9d9d9; border-bottom: 1px solid #d9d9d9; }
.tabs .on { height: 34px; padding: 0 20px 0 18px; background: #fff; }
.status { flex: none; height: 31px; }

.usb { position: absolute; right: 0; top: 1199px; width: 49px; height: 51px; padding-left: 11px; border: 2px solid #d2d2d2; border-right: 0; border-radius: 10px 0 0 10px; background: #fafafa; box-shadow: 0 0 4px #bbb; }
.usb svg { width: 24px; height: 32px; }
.arrow { position: absolute; z-index: 6; pointer-events: none; }
.a1 { left: 45px; top: 72px; width: 57px; height: 40px; }
.a2 { left: 387px; top: 529px; width: 44px; height: 54px; }
</style>
